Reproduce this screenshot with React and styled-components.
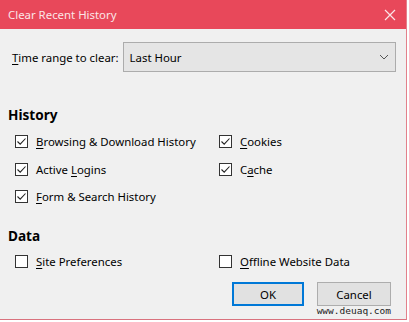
import React from "react";
import styled, { createGlobalStyle } from "styled-components";

const Global = createGlobalStyle`
  html, body { margin: 0; padding: 0; background: #ffffff; }
  body { font-family: "Noto Sans", "Open Sans", sans-serif; }
`;

const Window = styled.div`
  position: relative;
  width: 407px;
  height: 320px;
  box-sizing: border-box;
  background: #f0f0f0;
  border-right: 1px solid #e3808b;
  border-bottom: 1px solid #d9727e;
  display: flex;
  flex-direction: column;
  font-size: 11.4px;
  color: #000;
`;

const TitleBar = styled.div`
  height: 29px;
  background: #e8485a;
  display: flex;
  align-items: center;
  justify-content: space-between;
  padding: 0 10px 0 8px;
  flex-shrink: 0;
`;

const Title = styled.span`
  color: #fbe5e7;
  font-size: 11.4px;
`;

const Body = styled.div`
  flex: 1;
  display: flex;
  flex-direction: column;
  padding: 13px 10px 0 12px;
`;

const RangeRow = styled.div`
  display: flex;
  align-items: center;
  gap: 4px;
`;

const Select = styled.div`
  flex: 1;
  height: 30px;
  box-sizing: border-box;
  border: 1px solid #acacac;
  background: #e5e5e5;
  display: flex;
  align-items: center;
  justify-content: space-between;
  padding: 0 6px 0 6px;
`;

const Heading = styled.div`
  font-weight: 700;
  font-size: 13.6px;
  margin: ${(p) => p.$top}px 0 0 -4px;
  line-height: 18px;
`;

const Grid = styled.div`
  display: grid;
  grid-template-columns: 204px 1fr;
  row-gap: 8.5px;
  margin-top: ${(p) => p.$top}px;
  margin-left: 3px;
`;

const Item = styled.label`
  display: flex;
  align-items: center;
  gap: 8px;
  height: 19px;
`;

const Box = styled.span`
  width: 13px;
  height: 13px;
  box-sizing: border-box;
  border: 1px solid #333;
  background: #fff;
  display: flex;
  align-items: center;
  justify-content: center;
  flex-shrink: 0;
`;

const Footer = styled.div`
  display: flex;
  justify-content: flex-end;
  gap: 13px;
  margin-top: 11px;
  padding-right: 5px;
`;

const Button = styled.div`
  width: ${(p) => p.$w}px;
  height: 24px;
  box-sizing: border-box;
  border: ${(p) => (p.$primary ? "2px solid #0078d7" : "1px solid #adadad")};
  background: #e1e1e1;
  display: flex;
  align-items: center;
  justify-content: center;
`;

const Watermark = styled.div`
  position: absolute;
  right: 15px;
  bottom: 3px;
  font-family: "DejaVu Sans Mono", "Liberation Mono", monospace;
  font-size: 9.5px;
  color: #222;
`;

const U = styled.u`
  text-decoration-thickness: 1px;
  text-underline-offset: 2px;
`;

const Check = ({ checked }) => (
  <Box>
    {checked && (
      <svg width="11" height="11" viewBox="0 0 11 11">
        <path d="M1.5 5.5 L4.2 8.2 L9.5 2.5" fill="none" stroke="#222" strokeWidth="1.1" />
      </svg>
    )}
  </Box>
);

const Opt = ({ checked, children }) => (
  <Item>
    <Check checked={checked} />
    <span>{children}</span>
  </Item>
);

export default function App() {
  return (
    <>
      <Global />
      <Window>
        <TitleBar>
          <Title>Clear Recent History</Title>
          <svg width="12" height="12" viewBox="0 0 12 12">
            <path d="M1 1 L11 11 M11 1 L1 11" stroke="#fbe5e7" strokeWidth="1.2" />
          </svg>
        </TitleBar>
        <Body>
          <RangeRow>
            <span>
              <U>T</U>ime range to clear:
            </span>
            <Select>
              <span>Last Hour</span>
              <svg width="10" height="6" viewBox="0 0 10 6">
                <path d="M1 1 L5 5 L9 1" fill="none" stroke="#555" strokeWidth="1" />
              </svg>
            </Select>
          </RangeRow>
          <Heading $top={34}>History</Heading>
          <Grid $top={8}>
            <Opt checked>
              <U>B</U>rowsing &amp; Download History
            </Opt>
            <Opt checked>
              <U>C</U>ookies
            </Opt>
            <Opt checked>
              Active <U>L</U>ogins
            </Opt>
            <Opt checked>
              C<U>a</U>che
            </Opt>
            <Opt checked>
              <U>F</U>orm &amp; Search History
            </Opt>
            <span />
          </Grid>
          <Heading $top={21}>Data</Heading>
          <Grid $top={7}>
            <Opt>
              <U>S</U>ite Preferences
            </Opt>
            <Opt>
              <U>O</U>ffline Website Data
            </Opt>
          </Grid>
          <Footer>
            <Button $primary $w={72}>OK</Button>
            <Button $w={74}>Cancel</Button>
          </Footer>
        </Body>
        <Watermark>www.deuaq.com</Watermark>
      </Window>
    </>
  );
}
